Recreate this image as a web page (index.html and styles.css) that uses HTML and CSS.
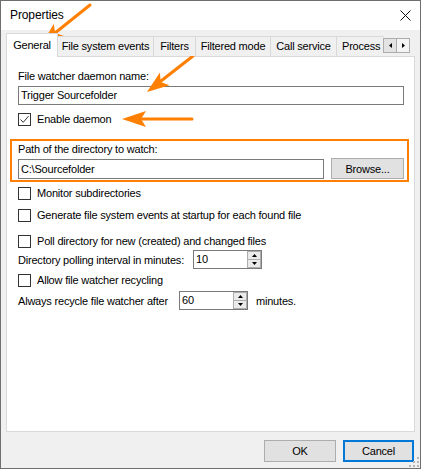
FILE: index.html
```html
<!DOCTYPE html>
<html>
<head>
<meta charset="utf-8">
<title>Properties</title>
<link rel="stylesheet" href="styles.css">
</head>
<body>
<div class="window">
  <div class="titlebar">
    <span class="title">Properties</span>
    <svg class="close" width="11" height="11" viewBox="0 0 11 11"><path d="M0.5 0.5L10.5 10.5M10.5 0.5L0.5 10.5" stroke="#111" stroke-width="1"/></svg>
  </div>
  <div class="content">
    <div class="tabstrip">
      <div class="tabs">
        <div class="tab tab-general active">General</div>
        <div class="tab tab-events">File system events</div>
        <div class="tab tab-filters">Filters</div>
        <div class="tab tab-mode">Filtered mode</div>
        <div class="tab tab-call">Call service</div>
        <div class="tab tab-process">Process</div>
      </div>
      <div class="tab-scroll">
        <span class="scroll-btn scroll-left"><svg width="3" height="5" viewBox="0 0 3 5"><polygon points="3,0 0,2.5 3,5" fill="#000"/></svg></span>
        <span class="scroll-btn"><svg width="3" height="5" viewBox="0 0 3 5"><polygon points="0,0 3,2.5 0,5" fill="#000"/></svg></span>
      </div>
    </div>
    <div class="panel">
      <div class="label">File watcher daemon name:</div>
      <div class="textbox name-box">Trigger Sourcefolder</div>
      <div class="check check-enable">
        <span class="box"><svg width="11" height="11" viewBox="0 0 11 11"><path d="M1.5 5.5L4.2 8.3L9.5 2.2" fill="none" stroke="#333" stroke-width="1"/></svg></span>
        <span>Enable daemon</span>
      </div>
      <div class="highlight">
        <div class="label">Path of the directory to watch:</div>
        <div class="path-row">
          <div class="textbox path-box">C:\Sourcefolder</div>
          <div class="button browse">Browse...</div>
        </div>
      </div>
      <div class="check check-monitor"><span class="box"></span><span>Monitor subdirectories</span></div>
      <div class="check check-generate"><span class="box"></span><span>Generate file system events at startup for each found file</span></div>
      <div class="check check-poll"><span class="box"></span><span>Poll directory for new (created) and changed files</span></div>
      <div class="spin-row spin-row-interval">
        <span class="spin-label spin-label-interval">Directory polling interval in minutes:</span>
        <div class="spinbox">
          <span class="spin-value">10</span>
          <span class="spin-buttons">
            <span class="spin-btn"><svg width="5" height="3" viewBox="0 0 5 3"><polygon points="0,3 2.5,0 5,3" fill="#000"/></svg></span>
            <span class="spin-btn"><svg width="5" height="3" viewBox="0 0 5 3"><polygon points="0,0 5,0 2.5,3" fill="#000"/></svg></span>
          </span>
        </div>
      </div>
      <div class="check check-allow"><span class="box"></span><span>Allow file watcher recycling</span></div>
      <div class="spin-row spin-row-recycle">
        <span class="spin-label spin-label-recycle">Always recycle file watcher after</span>
        <div class="spinbox">
          <span class="spin-value">60</span>
          <span class="spin-buttons">
            <span class="spin-btn"><svg width="5" height="3" viewBox="0 0 5 3"><polygon points="0,3 2.5,0 5,3" fill="#000"/></svg></span>
            <span class="spin-btn"><svg width="5" height="3" viewBox="0 0 5 3"><polygon points="0,0 5,0 2.5,3" fill="#000"/></svg></span>
          </span>
        </div>
        <span class="minutes">minutes.</span>
      </div>
    </div>
  </div>
  <div class="footer">
    <button class="btn">OK</button>
    <button class="btn btn-default">Cancel</button>
  </div>
  <svg class="grip" width="10" height="10" viewBox="0 0 10 10">
    <rect x="8" y="0" width="2" height="2" fill="#b5b5b5"/>
    <rect x="4" y="4" width="2" height="2" fill="#b5b5b5"/>
    <rect x="8" y="4" width="2" height="2" fill="#b5b5b5"/>
    <rect x="0" y="8" width="2" height="2" fill="#b5b5b5"/>
    <rect x="4" y="8" width="2" height="2" fill="#b5b5b5"/>
    <rect x="8" y="8" width="2" height="2" fill="#b5b5b5"/>
  </svg>
</div>
<svg class="annotations" width="421" height="469" viewBox="0 0 421 469">
  <g stroke="#ff7f00" stroke-width="3" stroke-linecap="round" fill="none">
    <line x1="90" y1="5" x2="55" y2="33"/>
    <line x1="193" y1="56" x2="161" y2="81"/>
    <line x1="192" y1="119" x2="139" y2="119"/>
  </g>
  <g fill="#ff7f00">
    <polygon points="42,44 53.8,23.8 55.1,33.1 64,36.1"/>
    <polygon points="147,92 159.9,72.5 160.7,81.9 169.5,85.3"/>
    <polygon points="122,119 146,111 141,119 146,127"/>
  </g>
</svg>
</body>
</html>
```

FILE: styles.css
```css
* {
  box-sizing: border-box;
}

html,
body {
  margin: 0;
  padding: 0;
}

body {
  position: relative;
  width: 421px;
  height: 469px;
  overflow: hidden;
  background: #ffffff;
  color: #000000;
  font-family: "Liberation Sans", Arial, sans-serif;
  font-size: 11px;
  letter-spacing: -0.2px;
}

.window {
  position: relative;
  display: flex;
  flex-direction: column;
  width: 421px;
  height: 469px;
  border: 1px solid #6f6f6f;
  background: #f0f0f0;
}

.titlebar {
  flex: none;
  display: flex;
  align-items: center;
  justify-content: space-between;
  height: 29px;
  padding: 0 9px 0 9px;
  background: #ffffff;
}

.title {
  font-size: 12px;
  line-height: 14px;
  letter-spacing: -0.1px;
  padding-bottom: 2px;
}

.close {
  display: block;
}

.content {
  flex: none;
  padding: 0 5px;
}

.tabstrip {
  position: relative;
  z-index: 1;
  height: 27px;
  margin-bottom: -1px;
}

.tabs {
  display: flex;
  align-items: flex-end;
  width: 378px;
  height: 27px;
  overflow: hidden;
}

.tab {
  flex: none;
  height: 20px;
  margin-bottom: 1px;
  margin-left: -1px;
  border: 1px solid #d9d9d9;
  border-bottom: none;
  background: #f0f0f0;
  line-height: 19px;
  text-align: center;
  white-space: nowrap;
}

.tab.active {
  position: relative;
  z-index: 1;
  height: 24px;
  margin-bottom: 0;
  margin-left: 0;
  background: #ffffff;
  line-height: 22px;
}

.tab-general { width: 52px; }
.tab-events { width: 97px; }
.tab-filters { width: 43px; }
.tab-mode { width: 76px; }
.tab-call { width: 67px; }
.tab-process { width: 60px; text-align: left; padding-left: 5px; }

.tab-scroll {
  position: absolute;
  top: 8px;
  right: 5px;
  display: flex;
}

.scroll-btn {
  display: flex;
  align-items: center;
  justify-content: center;
  width: 14px;
  height: 15px;
  border: 1px solid #adadad;
  background: #f4f4f4;
}

.scroll-btn + .scroll-btn {
  margin-left: -1px;
}

.scroll-left {
  background: #e3e3e3;
}

.scroll-btn svg {
  display: block;
}

.panel {
  height: 376px;
  padding: 13px 10px 0 11px;
  border: 1px solid #d9d9d9;
  background: #ffffff;
}

.label {
  line-height: 13px;
  white-space: nowrap;
}

.textbox {
  height: 20px;
  padding: 0 2px;
  border: 1px solid #7a7a7a;
  background: #ffffff;
  line-height: 18px;
  white-space: nowrap;
}

.name-box {
  height: 19px;
  margin-top: 3px;
  line-height: 17px;
}

.check {
  display: flex;
  align-items: center;
  gap: 6px;
  height: 13px;
  line-height: 13px;
  white-space: nowrap;
}

.box {
  display: block;
  flex: none;
  width: 13px;
  height: 13px;
  border: 1px solid #333333;
  background: #ffffff;
}

.box svg {
  display: block;
}

.check-enable { margin-top: 8px; }
.check-monitor { margin-top: 5px; }
.check-generate { margin-top: 9px; }
.check-poll { margin-top: 13px; }
.check-allow { margin-top: 5px; }

.highlight {
  margin: 13px -5px 0 -8px;
  padding: 2px 3px 1px 6px;
  border: 2px solid #ff8000;
}

.path-row {
  display: flex;
  align-items: center;
  height: 21px;
  margin-top: 2px;
}

.path-box {
  width: 306px;
}

.button {
  display: flex;
  align-items: center;
  justify-content: center;
  border: 1px solid #adadad;
  background: #e1e1e1;
}

.browse {
  width: 73px;
  height: 21px;
  margin-left: auto;
}

.spin-row {
  display: flex;
  align-items: center;
  height: 19px;
  white-space: nowrap;
}

.spin-row-interval { margin-top: 2px; }
.spin-row-recycle { margin-top: 4px; }

.spin-label-interval { width: 175px; }
.spin-label-recycle { width: 161px; }

.spinbox {
  display: flex;
  width: 69px;
  height: 19px;
  border: 1px solid #7a7a7a;
  background: #ffffff;
}

.spin-value {
  flex: 1;
  padding-left: 2px;
  line-height: 17px;
}

.spin-buttons {
  display: flex;
  flex-direction: column;
  width: 14px;
  margin: 0 0 0 0;
}

.spin-btn {
  display: flex;
  flex: 1;
  align-items: center;
  justify-content: center;
  border: 1px solid #adadad;
  background: #eaeaea;
}

.spin-btn + .spin-btn {
  border-top: none;
}

.spin-btn svg {
  display: block;
}

.minutes {
  margin-left: 8px;
}

.footer {
  flex: 1;
  display: flex;
  align-items: flex-start;
  justify-content: flex-end;
  gap: 7px;
  padding: 8px 6px 0 0;
}

.btn {
  width: 72px;
  height: 22px;
  padding: 0;
  border: 1px solid #adadad;
  background: #e1e1e1;
  color: #000000;
  font: inherit;
  letter-spacing: inherit;
}

.btn-default {
  width: 71px;
  border: 2px solid #0078d7;
}

.grip {
  position: absolute;
  right: 1px;
  bottom: 1px;
}

.annotations {
  position: absolute;
  top: 0;
  left: 0;
  pointer-events: none;
}
```
